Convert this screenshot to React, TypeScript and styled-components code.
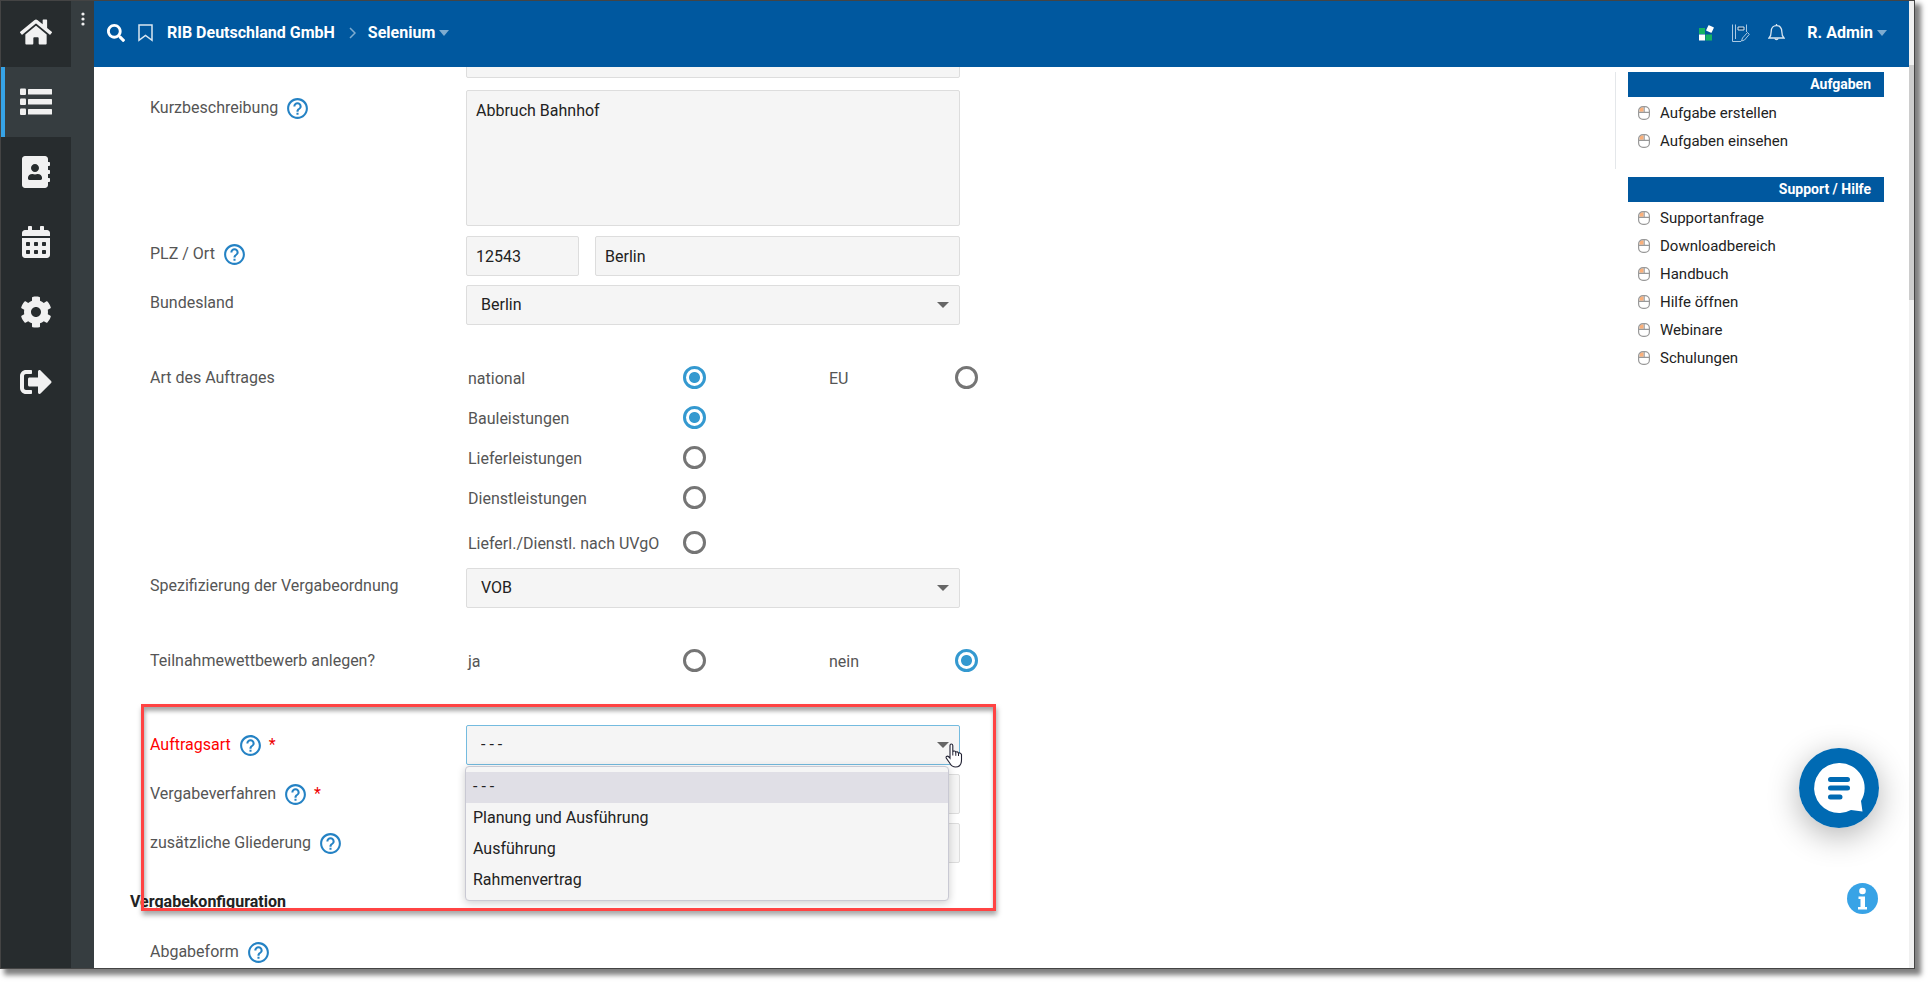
import React from "react";
import styled, { createGlobalStyle, css } from "styled-components";
import { FaHome, FaAddressBook, FaCalendarAlt, FaCog, FaSignOutAlt, FaSearch } from "react-icons/fa";
import { MdHelpOutline } from "react-icons/md";

const Global = createGlobalStyle`
  * { box-sizing: border-box; }
  body {
    margin: 0;
    background: #fff;
    font-family: Roboto, "Liberation Sans", sans-serif;
    font-size: 16px;
    line-height: 20px;
    color: #555;
  }
  button, input, select, textarea { font: inherit; color: inherit; }
`;

const Stage = styled.div`
  position: relative;
  height: 100vh;
  padding: 0 15px 15px 0;
  overflow: hidden;
`;

const Frame = styled.div`
  display: flex;
  height: 100%;
  border: 1px solid #444;
  background: #fff;
  box-shadow: 5px 5px 5px 1px rgba(0, 0, 0, 0.5);
`;

const Sidebar = styled.nav`
  flex: none;
  width: 70px;
  background: #272c2e;
`;

const NavLink = styled.a<{ $active?: boolean; $first?: boolean }>`
  display: flex;
  align-items: center;
  justify-content: center;
  height: ${(p) => (p.$first ? 66 : 70)}px;
  color: #f1f1f1;
  ${(p) =>
    p.$first &&
    css`
      padding-bottom: 4px;
    `}
  ${(p) =>
    p.$active &&
    css`
      background: #363d40;
      box-shadow: inset 4px 0 0 #36a3e6;
    `}
`;

const Rail = styled.div`
  flex: none;
  display: flex;
  justify-content: center;
  width: 23px;
  padding-top: 11px;
  background: #363d40;
`;

const RailButton = styled.button`
  height: 14px;
  padding: 0;
  border: 0;
  background: none;
  line-height: 0;
`;

const Body = styled.div`
  flex: 1;
  min-width: 0;
  display: flex;
  flex-direction: column;
`;

const TopBar = styled.header`
  flex: none;
  display: flex;
  align-items: center;
  height: 66px;
  padding: 0 22px 0 13px;
  background: #00589f;
  color: #fff;
  font-weight: 700;
`;

const BarButton = styled.button<{ $gap: number }>`
  display: flex;
  align-items: center;
  gap: 4px;
  margin: 0 ${(p) => p.$gap}px 0 0;
  padding: 0 0 2px;
  border: 0;
  background: none;
  white-space: nowrap;
`;

const Crumb = styled.a`
  color: #fff;
  padding-bottom: 2px;
  margin-right: 14px;
  text-decoration: none;
  white-space: nowrap;
`;

const Spacer = styled.div`
  flex: 1;
`;

const Content = styled.div`
  flex: 1;
  min-height: 0;
  display: flex;
  justify-content: space-between;
  overflow: hidden;
`;

const Form = styled.form`
  flex: 0 1 866px;
  margin-top: -29px;
  padding-left: 56px;
`;

const Row = styled.div<{ $top?: number }>`
  display: flex;
  align-items: flex-start;
  margin-top: ${(p) => p.$top ?? 9}px;
`;

const LabelBox = styled.div<{ $top?: number; $alert?: boolean }>`
  flex: none;
  display: flex;
  align-items: center;
  width: 316px;
  height: 20px;
  margin-top: ${(p) => p.$top ?? 8}px;
  color: ${(p) => (p.$alert ? "#f00" : "#555")};
`;

const HelpButton = styled.button`
  height: 25px;
  margin: 0 0 0 7px;
  padding: 0;
  border: 0;
  background: none;
  color: #2482c4;
  line-height: 0;
`;

const Star = styled.span`
  margin-left: 6px;
  color: #e00;
`;

const Fields = styled.div`
  position: relative;
  flex: 0 1 494px;
  display: flex;
  gap: 16px;
`;

const box = css`
  display: block;
  border: 1px solid #ddd;
  border-radius: 2px;
  background: #f5f5f5;
  color: #222;
`;

const TextInput = styled.input<{ $width?: number }>`
  ${box}
  height: 40px;
  padding: 0 9px;
  min-width: 0;
  flex: ${(p) => (p.$width ? `0 0 ${p.$width}px` : "1")};
`;

const TextArea = styled.textarea`
  ${box}
  flex: 1;
  height: 136px;
  padding: 10px 9px;
  resize: none;
`;

const Select = styled.select<{ $open?: boolean }>`
  ${box}
  flex: 1;
  height: 40px;
  padding: 0 30px 0 14px;
  appearance: none;
  ${(p) =>
    p.$open &&
    css`
      border-color: #74bbdf;
    `}
`;

const Caret = styled.svg`
  position: absolute;
  right: 11px;
  top: 17px;
  pointer-events: none;
`;

const RadioGrid = styled.div`
  display: grid;
  grid-template-columns: 215px 146px 126px 23px;
  padding-left: 2px;
`;

const RadioCell = styled.div<{ $last?: boolean }>`
  display: grid;
  grid-column: span 2;
  grid-template-columns: subgrid;
  align-items: center;
  height: 40px;
  margin-top: ${(p) => (p.$last ? 5 : 0)}px;
  padding-bottom: 2px;
`;

const RadioText = styled.label`
  padding-top: 4px;
  white-space: nowrap;
`;

const Radio = styled.input`
  appearance: none;
  width: 23px;
  height: 23px;
  margin: 0;
  border: 3px solid #757575;
  border-radius: 50%;
  background: #fff;
  &:checked {
    border-color: #3499d0;
    background: radial-gradient(circle, #3499d0 5px, #fff 6px);
  }
`;

const SectionTitle = styled.h2`
  margin: 29px 0 0 -20px;
  font-size: 16px;
  line-height: 20px;
  font-weight: 700;
  color: #222;
`;

const Options = styled.ul`
  position: absolute;
  z-index: 2;
  top: 41px;
  left: -1px;
  right: 11px;
  margin: 0;
  padding: 5px 0 4px;
  list-style: none;
  border: 1px solid #c9c9d3;
  border-radius: 4px;
  background: #f5f5f5;
  box-shadow: 0 2px 8px rgba(0, 0, 0, 0.2);
  color: #222;
`;

const Option = styled.li<{ $selected?: boolean }>`
  padding: 5px 7px 6px;
  background: ${(p) => (p.$selected ? "#e0dfe6" : "transparent")};
`;

const Highlight = styled.div`
  position: absolute;
  z-index: 3;
  top: -21px;
  left: -325px;
  right: -36px;
  height: 207px;
  border: 3px solid #ff4343;
  box-shadow: 1px 4px 5px rgba(0, 0, 0, 0.35), inset 1px 4px 4px rgba(0, 0, 0, 0.35);
  pointer-events: none;
`;

const Pointer = styled.svg`
  position: absolute;
  z-index: 4;
  right: -3px;
  top: 18px;
  pointer-events: none;
`;

const Aside = styled.aside`
  flex: none;
  width: 294px;
  padding-top: 5px;
`;

const Panel = styled.section<{ $ruled?: boolean }>`
  margin-bottom: 8px;
  padding: 0 25px 0 12px;
  border-left: 1px solid ${(p) => (p.$ruled ? "#e4e7ea" : "transparent")};
  min-height: 97px;
`;

const PanelTitle = styled.h3`
  margin: 0 0 2px;
  padding-right: 13px;
  background: #00589f;
  color: #fff;
  font-size: 14px;
  line-height: 25px;
  font-weight: 700;
  text-align: right;
`;

const PanelLink = styled.a`
  display: flex;
  align-items: center;
  gap: 10px;
  height: 28px;
  padding-left: 10px;
  color: #222;
  font-size: 15px;
  text-decoration: none;
`;

const ScrollTrack = styled.div`
  flex: none;
  width: 5px;
  padding-top: 64px;
  background: #f0f0f0;
`;

const ScrollThumb = styled.div`
  height: 235px;
  background: #cdcdcd;
`;

const FloatButton = styled.button<{ $right: number; $bottom: number; $size: number }>`
  position: absolute;
  right: ${(p) => p.$right}px;
  bottom: ${(p) => p.$bottom}px;
  width: ${(p) => p.$size}px;
  height: ${(p) => p.$size}px;
  padding: 0;
  border: 0;
  border-radius: 50%;
  background: none;
  line-height: 0;
`;

const ChatButton = styled(FloatButton)`
  box-shadow: 0 8px 32px rgba(0, 0, 0, 0.3);
`;

const Help = ({ about }: { about: string }) => (
  <HelpButton type="button" aria-label={`Hilfe zu ${about}`}>
    <MdHelpOutline size={25} />
  </HelpButton>
);

type LabelProps = { text: string; htmlFor?: string; help?: boolean; required?: boolean; alert?: boolean; top?: number };
const FieldLabel = ({ text, htmlFor, help, required, alert, top }: LabelProps) => (
  <LabelBox $top={top} $alert={alert}>
    {htmlFor ? <label htmlFor={htmlFor}>{text}</label> : <span>{text}</span>}
    {help && <Help about={text} />}
    {required && <Star>*</Star>}
  </LabelBox>
);

const Down = () => (
  <Caret width="12" height="6" viewBox="0 0 12 6">
    <path d="M0 0H12L6 6Z" fill="#666" />
  </Caret>
);

const BarDown = () => (
  <svg width="10" height="6" viewBox="0 0 10 6">
    <path d="M0 0H10L5 6Z" fill="#7facd0" />
  </svg>
);

type RadioProps = { name: string; label: string; checked?: boolean; last?: boolean };
const RadioOption = ({ name, label, checked, last }: RadioProps) => {
  const id = `${name}-${label}`;
  return (
    <RadioCell $last={last}>
      <RadioText htmlFor={id}>{label}</RadioText>
      <Radio type="radio" id={id} name={name} defaultChecked={checked} />
    </RadioCell>
  );
};

const MouseIcon = () => (
  <svg width="12" height="14" viewBox="0 0 12 14" fill="none">
    <path d="M1.5 5.8V4.4Q1.5 1.2 4.6 1.2H5.6V5.8Z" fill="#fbb07a" />
    <rect x="0.6" y="0.6" width="10.8" height="12.8" rx="4.4" stroke="#999" strokeWidth="1.2" />
    <path d="M0.6 6.4H11.4M6.2 0.6V6.4" stroke="#999" strokeWidth="1.1" />
  </svg>
);

const tasks = ["Aufgabe erstellen", "Aufgaben einsehen"];
const support = ["Supportanfrage", "Downloadbereich", "Handbuch", "Hilfe öffnen", "Webinare", "Schulungen"];
const orderTypes = ["- - -", "Planung und Ausführung", "Ausführung", "Rahmenvertrag"];

const LinkList = ({ items }: { items: string[] }) => (
  <>
    {items.map((item) => (
      <PanelLink href="#" key={item}>
        <MouseIcon />
        {item}
      </PanelLink>
    ))}
  </>
);

export default function App() {
  return (
    <Stage>
      <Global />
      <Frame>
        <Sidebar>
          <NavLink href="#" aria-label="Start" $first><FaHome size={32} /></NavLink>
          <NavLink href="#" aria-label="Liste" $active>
            <svg width="32" height="28" viewBox="0 0 32 28" fill="currentColor">
              {[0, 10, 20].map((y) => (
                <g key={y}>
                  <rect x="0" y={y + 0.5} width="6" height="6.5" rx="1" />
                  <rect x="8" y={y + 1} width="24" height="5.5" rx="0.5" />
                </g>
              ))}
            </svg>
          </NavLink>
          <NavLink href="#" aria-label="Kontakte"><FaAddressBook size={32} /></NavLink>
          <NavLink href="#" aria-label="Kalender"><FaCalendarAlt size={32} /></NavLink>
          <NavLink href="#" aria-label="Einstellungen"><FaCog size={32} /></NavLink>
          <NavLink href="#" aria-label="Abmelden"><FaSignOutAlt size={32} /></NavLink>
        </Sidebar>
        <Rail>
          <RailButton aria-label="Mehr">
            <svg width="4" height="14" viewBox="0 0 4 14" fill="#f1f1f1">
              <circle cx="2" cy="2" r="1.6" />
              <circle cx="2" cy="7" r="1.6" />
              <circle cx="2" cy="12" r="1.6" />
            </svg>
          </RailButton>
        </Rail>
        <Body>
          <TopBar>
            <BarButton $gap={13} aria-label="Suche"><FaSearch size={18} /></BarButton>
            <BarButton $gap={14} aria-label="Lesezeichen">
              <svg width="15" height="18" viewBox="0 0 15 18" fill="none">
                <path d="M1 1H14V16.3L7.5 11.4L1 16.3Z" stroke="#d9e6f1" strokeWidth="1.5" />
              </svg>
            </BarButton>
            <Crumb href="#">RIB Deutschland GmbH</Crumb>
            <BarButton as="span" $gap={12}>
              <svg width="7" height="12" viewBox="0 0 7 12" fill="none">
                <path d="M1 1L6 6L1 11" stroke="#7facd0" strokeWidth="1.5" />
              </svg>
            </BarButton>
            <BarButton $gap={0}>Selenium<BarDown /></BarButton>
            <Spacer />
            <BarButton $gap={18} aria-label="Apps">
              <svg width="15" height="16" viewBox="0 0 15 16">
                <rect x="0" y="3" width="6" height="6" fill="#16b364" />
                <rect x="0" y="9.5" width="6" height="6" fill="#fff" />
                <rect x="6.500" y="9.500" width="6.500" height="6" fill="#16b364" />
                <rect x="8" y="1" width="6" height="6" rx="0.5" fill="#fff" transform="rotate(25 11 4)" />
              </svg>
            </BarButton>
            <BarButton $gap={18} aria-label="Notizen">
              <svg width="18" height="18" viewBox="0 0 18 18" fill="none" stroke="#a9c8e2">
                <path d="M0.500 0.500V17.500M3.500 0.500V15M14.500 0.500V8M0.500 17.500H9" />
                <path d="M6 3H12V6H6Z" stroke="#d9e6f1" fill="#003a6b" />
                <path d="M9.500 17L10.500 14L15.500 8.500L17.300 10.300L12.500 16Z" />
              </svg>
            </BarButton>
            <BarButton $gap={22} aria-label="Benachrichtigungen">
              <svg width="17" height="18" viewBox="0 0 17 18" fill="none" stroke="#d9e6f1" strokeWidth="1.3">
                <path d="M1 14C2.600 12.500 3.200 11 3.200 7.500C3.200 4 5.200 1.600 8.500 1.600C11.800 1.600 13.800 4 13.800 7.500C13.800 11 14.400 12.500 16 14Z" />
                <path d="M6.800 14.400A1.800 1.800 0 0 0 10.200 14.400M8.500 0V1.600" />
              </svg>
            </BarButton>
            <BarButton $gap={0}>R. Admin<BarDown /></BarButton>
          </TopBar>
          <Content>
            <Form>
              <Row $top={0}>
                <LabelBox />
                <Fields><TextInput aria-label="Bezeichnung" /></Fields>
              </Row>
              <Row $top={12}>
                <FieldLabel text="Kurzbeschreibung" htmlFor="desc" help />
                <Fields><TextArea id="desc" defaultValue="Abbruch Bahnhof" /></Fields>
              </Row>
              <Row $top={10}>
                <FieldLabel text="PLZ / Ort" htmlFor="zip" help />
                <Fields>
                  <TextInput id="zip" $width={113} defaultValue="12543" />
                  <TextInput aria-label="Ort" defaultValue="Berlin" />
                </Fields>
              </Row>
              <Row>
                <FieldLabel text="Bundesland" htmlFor="state" />
                <Fields>
                  <Select id="state"><option>Berlin</option></Select>
                  <Down />
                </Fields>
              </Row>
              <Row $top={33}>
                <FieldLabel text="Art des Auftrages" top={10} />
                <RadioGrid role="group" aria-label="Art des Auftrages">
                  <RadioOption name="scope" label="national" checked />
                  <RadioOption name="scope" label="EU" />
                  <RadioOption name="kind" label="Bauleistungen" checked />
                  <div /><div />
                  <RadioOption name="kind" label="Lieferleistungen" />
                  <div /><div />
                  <RadioOption name="kind" label="Dienstleistungen" />
                  <div /><div />
                  <RadioOption name="kind" label="Lieferl./Dienstl. nach UVgO" last />
                </RadioGrid>
              </Row>
              <Row $top={5}>
                <FieldLabel text="Spezifizierung der Vergabeordnung" htmlFor="rules" />
                <Fields>
                  <Select id="rules"><option>VOB</option></Select>
                  <Down />
                </Fields>
              </Row>
              <Row $top={33}>
                <FieldLabel text="Teilnahmewettbewerb anlegen?" top={10} />
                <RadioGrid role="group" aria-label="Teilnahmewettbewerb anlegen?">
                  <RadioOption name="contest" label="ja" />
                  <RadioOption name="contest" label="nein" checked />
                </RadioGrid>
              </Row>
              <Row $top={44}>
                <FieldLabel text="Auftragsart" htmlFor="type" help required alert top={10} />
                <Fields>
                  <Select id="type" $open><option>- - -</option></Select>
                  <Down />
                  <Options role="listbox" aria-label="Auftragsart">
                    {orderTypes.map((t, i) => (
                      <Option key={t} role="option" aria-selected={i === 0} $selected={i === 0}>{t}</Option>
                    ))}
                  </Options>
                  <Highlight />
                  <Pointer width="18" height="25" viewBox="0 0 18 25">
                    <path
                      d="M5 2.5Q5 1 6.3 1T7.8 2.5V9Q8 7.8 9.3 8T10.8 9.3Q11.3 8.6 12.3 8.9T13.5 10.3Q14 9.7 15 10T16.5 11.5V17Q16.5 24 10.5 24Q7 24 5 20.5L1.2 15Q0.8 13.6 2 13.2T5 15.2Z"
                      fill="#fff" stroke="#223" strokeWidth="1.1"
                    />
                    <path d="M7.8 9V12.5M10.8 9.5V12.8M13.5 10.5V13" stroke="#223" fill="none" />
                  </Pointer>
                </Fields>
              </Row>
              <Row>
                <FieldLabel text="Vergabeverfahren" htmlFor="procedure" help required top={10} />
                <Fields><TextInput id="procedure" /></Fields>
              </Row>
              <Row>
                <FieldLabel text="zusätzliche Gliederung" htmlFor="structure" help top={10} />
                <Fields><TextInput id="structure" /></Fields>
              </Row>
              <SectionTitle>Vergabekonfiguration</SectionTitle>
              <Row $top={30}>
                <FieldLabel text="Abgabeform" help top={0} />
              </Row>
            </Form>
            <Aside>
              <Panel $ruled>
                <PanelTitle>Aufgaben</PanelTitle>
                <LinkList items={tasks} />
              </Panel>
              <Panel>
                <PanelTitle>Support / Hilfe</PanelTitle>
                <LinkList items={support} />
              </Panel>
            </Aside>
          </Content>
        </Body>
        <ScrollTrack><ScrollThumb /></ScrollTrack>
      </Frame>
      <ChatButton $right={51} $bottom={156} $size={80} aria-label="Chat öffnen">
        <svg width="80" height="80" viewBox="0 0 80 80">
          <circle cx="40" cy="40" r="40" fill="#006ab3" />
          <path d="M40 15A25 25 0 1 0 52 62L63.500 63.500L62 53A25 25 0 0 0 40 15Z" fill="#fff" />
          <path d="M31.500 31.500H48.500M31.500 40H48.500M31.500 49H41" stroke="#006ab3" strokeWidth="5" strokeLinecap="round" />
        </svg>
      </ChatButton>
      <FloatButton $right={52} $bottom={70} $size={31} aria-label="Information">
        <svg width="31" height="31" viewBox="0 0 31 31">
          <circle cx="15.500" cy="15.500" r="15.500" fill="#38a3e6" />
          <circle cx="15.500" cy="8" r="3.300" fill="#fff" />
          <path d="M11.500 13.500H18V24H20V26.500H11V24H13.500V16H11.500Z" fill="#fff" />
        </svg>
      </FloatButton>
    </Stage>
  );
}
